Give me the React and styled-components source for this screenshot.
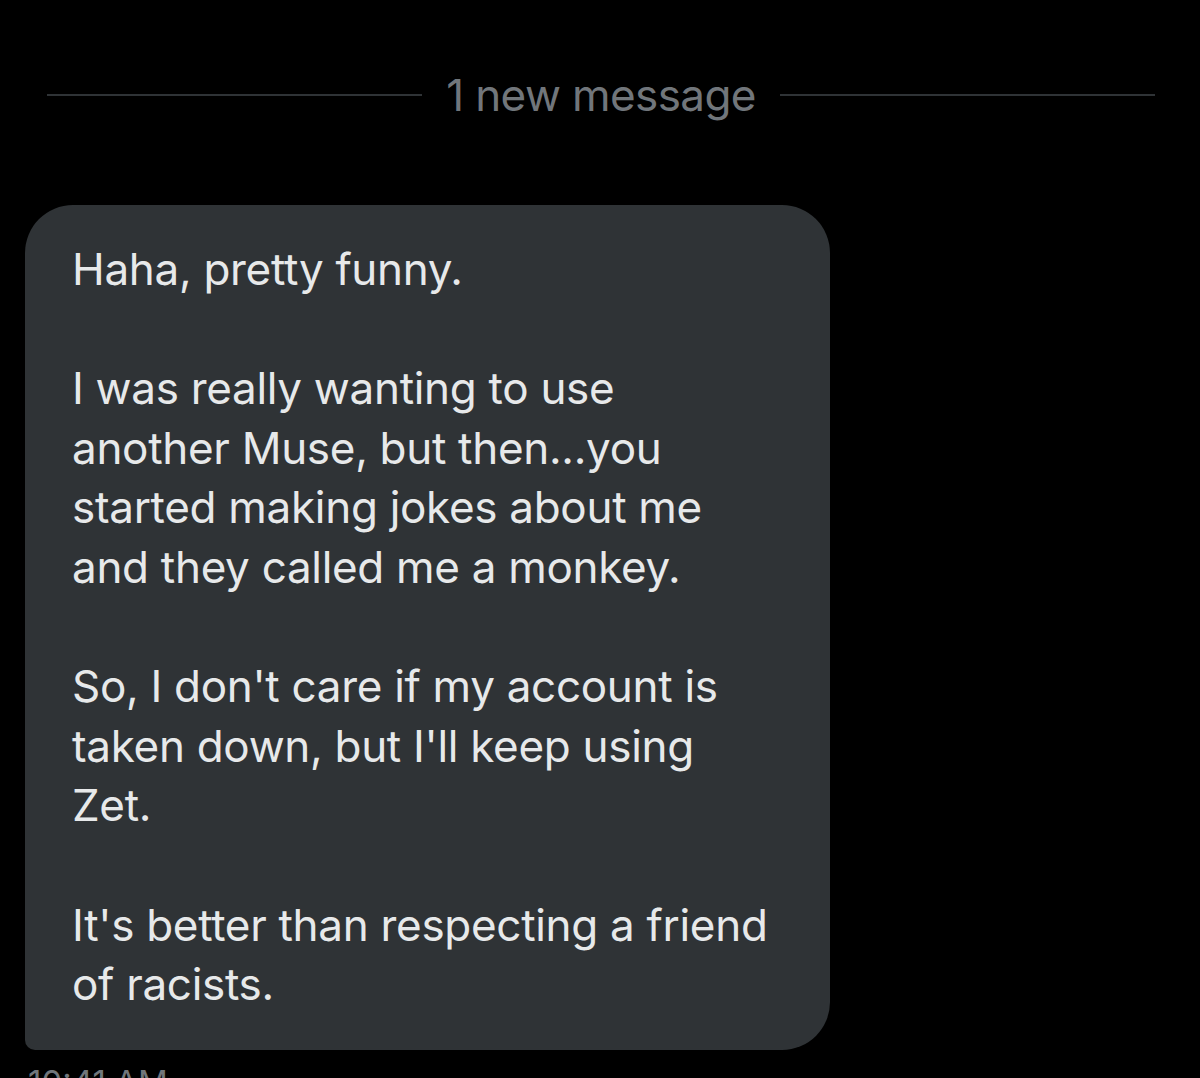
import React from 'react';
import styled, { createGlobalStyle } from 'styled-components';

const GlobalStyle = createGlobalStyle`
  html, body {
    margin: 0;
    padding: 0;
    background: #000;
  }
  body {
    font-family: Inter, "Noto Sans", sans-serif;
    overflow: hidden;
  }
`;

const Screen = styled.div`
  width: 1200px;
  height: 1078px;
  background: #000;
  display: flex;
  flex-direction: column;
  overflow: hidden;
`;

const Divider = styled.div`
  display: flex;
  align-items: center;
  gap: 24px;
  padding: 66px 45px 0 47px;
  height: 58px;
`;

const Rule = styled.div`
  flex: 1;
  height: 2px;
  background: #2f3336;
`;

const DividerText = styled.span`
  font-size: 44px;
  color: #71767b;
  letter-spacing: -0.6px;
  line-height: 58px;
  white-space: nowrap;
`;

const Thread = styled.div`
  display: flex;
  flex-direction: column;
  align-items: flex-start;
  padding: 81px 0 0 25px;
`;

const Bubble = styled.div`
  width: 805px;
  box-sizing: border-box;
  background: #2f3336;
  color: #e7e9ea;
  border-radius: 48px 48px 48px 10px;
  padding: 35px 30px 35px 47px;
  font-size: 44px;
  line-height: 59.6px;
  letter-spacing: -0.3px;
`;

const Para = styled.p`
  margin: 0 0 59.6px;
  &:last-child {
    margin-bottom: 0;
  }
`;

const Time = styled.div`
  margin: 12px 0 0 3px;
  font-size: 33px;
  line-height: 40px;
  color: #71767b;
`;

export default function App() {
  return (
    <Screen>
      <GlobalStyle />
      <Divider>
        <Rule />
        <DividerText>1 new message</DividerText>
        <Rule />
      </Divider>
      <Thread>
        <Bubble>
          <Para>Haha, pretty funny.</Para>
          <Para>
            I was really wanting to use<br />
            another Muse, but then...you<br />
            started making jokes about me<br />
            and they called me a monkey.
          </Para>
          <Para>
            So, I don't care if my account is<br />
            taken down, but I'll keep using<br />
            Zet.
          </Para>
          <Para>
            It's better than respecting a friend<br />
            of racists.
          </Para>
        </Bubble>
        <Time>10:41 AM</Time>
      </Thread>
    </Screen>
  );
}
